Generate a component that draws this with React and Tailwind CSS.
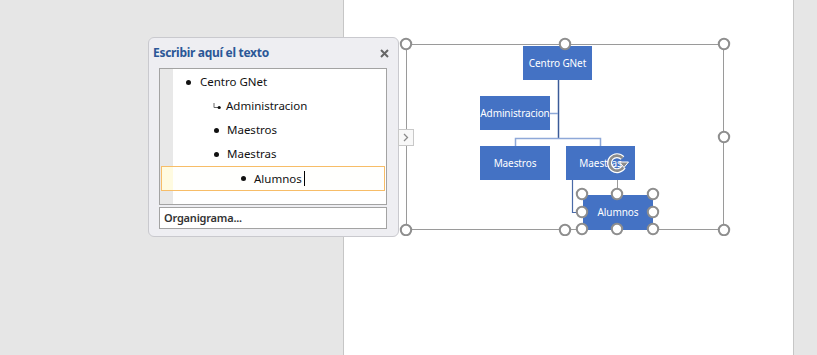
import React from "react";

const Bullet = () => (
  <span className="inline-block w-[5px] h-[5px] rounded-full bg-[#111]" />
);

const Arrow = () => (
  <svg width="8" height="7" viewBox="0 0 8 7">
    <path d="M1 0 V4.5 H5.5" stroke="#666" strokeWidth="1" fill="none" />
    <circle cx="6.2" cy="4.5" r="1.6" fill="#111" />
  </svg>
);

const TextPane = () => (
  <div className="absolute left-[148px] top-[37px] w-[251px] h-[200px] rounded-[6px] border border-[#c9c9ce] bg-[#eeeef2] flex flex-col">
    <div className="h-[30px] flex items-center justify-between pl-[4px] pr-[9px]">
      <span className="text-[12px] font-bold text-[#2b5797] tracking-[-0.3px]">
        Escribir aquí el texto
      </span>
      <svg width="9" height="9" viewBox="0 0 9 9">
        <path d="M1 1 L8 8 M8 1 L1 8" stroke="#666" strokeWidth="2" />
      </svg>
    </div>
    <div className="ml-[10px] mr-[11px] h-[137px] border border-[#a3a3a3] bg-[linear-gradient(to_right,#e8e8e8_13px,#ffffff_13px)] pt-[1px] text-[11.5px] text-[#111]">
      <div className="h-[24px] flex items-center pl-[26px] gap-[9px]">
        <Bullet />
        <span>Centro GNet</span>
      </div>
      <div className="h-[24px] flex items-center pl-[53px] gap-[5px]">
        <Arrow />
        <span>Administracion</span>
      </div>
      <div className="h-[24px] flex items-center pl-[54px] gap-[8px]">
        <Bullet />
        <span>Maestros</span>
      </div>
      <div className="h-[24px] flex items-center pl-[54px] gap-[8px]">
        <Bullet />
        <span>Maestras</span>
      </div>
      <div className="mx-[1px] h-[25px] border border-[#f7bd68] bg-[linear-gradient(to_right,#fffbe0_11px,#fffffd_11px)] flex items-center pl-[79px] gap-[8px]">
        <Bullet />
        <span className="flex items-center">
          Alumnos
          <span className="ml-[2px] w-[1px] h-[15px] bg-black" />
        </span>
      </div>
    </div>
    <div className="mt-[2px] ml-[10px] mr-[11px] h-[22px] border border-[#a3a3a3] bg-white flex items-center pl-[4px] text-[11px] font-semibold text-[#333] tracking-[-0.2px]">
      Organigrama...
    </div>
  </div>
);

const Box = ({ x, y, w, h, label }) => (
  <div
    className="absolute bg-[#4472c4] text-white text-[10px] flex items-center justify-center whitespace-nowrap tracking-[-0.1px]"
    style={{ left: x, top: y, width: w, height: h }}
  >
    {label}
  </div>
);

const Handle = ({ cx, cy }) => (
  <circle cx={cx} cy={cy} r="5.2" fill="#fff" stroke="#8e8e8e" strokeWidth="2" />
);

const Diagram = () => (
  <div className="absolute left-[398px] top-[36px] w-[340px] h-[200px]">
    <svg className="absolute inset-0" width="340" height="200">
      <rect x="8.5" y="8.5" width="317" height="185" fill="none" stroke="#9a9a9a" strokeWidth="1" />
      <path d="M160.5 44 V102.5" stroke="#3a5a98" strokeWidth="1.5" />
      <path d="M152 77.5 H160" stroke="#8ea8d8" strokeWidth="1.5" />
      <path d="M117.5 110 V102.5 H202.5 V110" stroke="#8ea8d8" strokeWidth="1.5" fill="none" />
      <path d="M174.5 144 V176.5 H185" stroke="#4a6aa8" strokeWidth="1.2" fill="none" />
      <path d="M219.5 134 V159" stroke="#9a9a9a" strokeWidth="1" />
    </svg>
    <Box x={125} y={10} w={69} h={34} label="Centro GNet" />
    <Box x={82} y={60} w={70} h={34} label="Administracion" />
    <Box x={82} y={110} w={70} h={34} label="Maestros" />
    <Box x={168} y={110} w={69} h={34} label="Maestras" />
    <Box x={185} y={159} w={70} h={35} label="Alumnos" />
    <div className="absolute left-0 top-[93px] w-[16px] h-[17px] bg-[#f8f8f8] border border-[#c8c8c8] flex items-center justify-center">
      <svg width="6" height="9" viewBox="0 0 6 9">
        <path d="M1 1 L4.5 4.5 L1 8" stroke="#8a8a8a" strokeWidth="1.3" fill="none" />
      </svg>
    </div>
    <svg className="absolute inset-0" width="340" height="200">
      <Handle cx={8} cy={8} />
      <Handle cx={167} cy={8} />
      <Handle cx={326} cy={8} />
      <Handle cx={326} cy={101} />
      <Handle cx={326} cy={194} />
      <Handle cx={167} cy={194} />
      <Handle cx={8} cy={194} />
      <Handle cx={184} cy={158} />
      <Handle cx={219} cy={158} />
      <Handle cx={255} cy={158} />
      <Handle cx={184} cy={176} />
      <Handle cx={255} cy={176} />
      <Handle cx={184} cy={193} />
      <Handle cx={219} cy={193} />
      <Handle cx={255} cy={193} />
      <g transform="translate(219 127)">
        <path d="M6.5 4 A7.5 7.5 0 1 1 5.5 -5" stroke="#ffffff" strokeWidth="5" fill="none" />
        <path d="M6.5 4 A7.5 7.5 0 1 1 5.5 -5" stroke="#8c8c8c" strokeWidth="2.6" fill="none" />
        <path d="M2.5 -1 L11.5 -1 L7 4.5 Z" fill="#8c8c8c" stroke="#ffffff" strokeWidth="1" />
      </g>
    </svg>
  </div>
);

export default function App() {
  return (
    <div className="relative w-[817px] h-[355px] overflow-hidden flex font-['Noto_Sans',sans-serif]">
      <div className="w-[344px] bg-[#e6e6e6] border-r border-[#c6c6c6]" />
      <div className="w-[449px] bg-white" />
      <div className="flex-1 bg-[#e6e6e6] border-l border-[#c6c6c6]" />
      <TextPane />
      <Diagram />
    </div>
  );
}
